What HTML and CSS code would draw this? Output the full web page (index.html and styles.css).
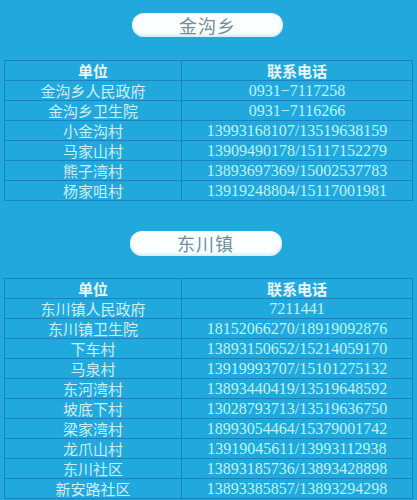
FILE: index.html
```html
<!DOCTYPE html>
<html lang="zh">
<head>
<meta charset="utf-8">
<link rel="stylesheet" href="styles.css">
</head>
<body>
<div class="page">
  <section class="sec first">
    <div class="pill-wrap"><div class="pill">金沟乡</div></div>
    <table class="tbl">
      <tr><th class="c1">单位</th><th class="c2">联系电话</th></tr>
      <tr><td>金沟乡人民政府</td><td class="num">0931−7117258</td></tr>
      <tr><td>金沟乡卫生院</td><td class="num">0931−7116266</td></tr>
      <tr><td>小金沟村</td><td class="num">13993168107/13519638159</td></tr>
      <tr><td>马家山村</td><td class="num">13909490178/15117152279</td></tr>
      <tr><td>熊子湾村</td><td class="num">13893697369/15002537783</td></tr>
      <tr><td>杨家咀村</td><td class="num">13919248804/15117001981</td></tr>
    </table>
  </section>
  <section class="sec second">
    <div class="pill-wrap"><div class="pill">东川镇</div></div>
    <table class="tbl">
      <tr><th class="c1">单位</th><th class="c2">联系电话</th></tr>
      <tr><td>东川镇人民政府</td><td class="num">7211441</td></tr>
      <tr><td>东川镇卫生院</td><td class="num">18152066270/18919092876</td></tr>
      <tr><td>下车村</td><td class="num">13893150652/15214059170</td></tr>
      <tr><td>马泉村</td><td class="num">13919993707/15101275132</td></tr>
      <tr><td>东河湾村</td><td class="num">13893440419/13519648592</td></tr>
      <tr><td>坡底下村</td><td class="num">13028793713/13519636750</td></tr>
      <tr><td>梁家湾村</td><td class="num">18993054464/15379001742</td></tr>
      <tr><td>龙爪山村</td><td class="num">13919045611/13993112938</td></tr>
      <tr><td>东川社区</td><td class="num">13893185736/13893428898</td></tr>
      <tr><td>新安路社区</td><td class="num">13893385857/13893294298</td></tr>
    </table>
  </section>
</div>
</body>
</html>
```
FILE: styles.css
```css
html, body {
  margin: 0;
  padding: 0;
  background: #21a9de;
}
.page {
  width: 417px;
  height: 500px;
  overflow: hidden;
  background: #21a9de;
  font-family: "Liberation Serif", "Noto Sans CJK SC", serif;
}
.sec.first { padding-top: 13px; }
.sec.second { padding-top: 30px; }
.pill-wrap {
  display: flex;
  justify-content: center;
  margin-bottom: 23px;
}
.pill {
  width: 151px;
  height: 24px;
  margin-left: -2px;
  border-radius: 12px;
  background: #fbfeff;
  box-shadow: inset 0 -2px 3px rgba(170, 220, 240, 0.5);
  color: #6f8f9a;
  font-family: "Noto Sans CJK SC", serif;
  font-size: 18px;
  line-height: 24px;
  text-align: center;
  letter-spacing: 1px;
}
.second .pill { width: 152px; height: 25px; line-height: 25px; margin-left: -6px; }
.second .pill-wrap { margin-bottom: 22px; }
.tbl {
  margin-left: 4px;
  width: 409px;
  border-collapse: collapse;
  table-layout: fixed;
}
.tbl th, .tbl td {
  border: 1px solid #1786c0;
  height: 19px;
  padding: 0;
  text-align: center;
  line-height: 19px;
  white-space: nowrap;
  overflow: hidden;
}
.tbl .c1 { width: 176px; }
.tbl th {
  color: #e8f7fd;
  font-family: "Noto Sans CJK SC", sans-serif;
  font-weight: 700;
  font-size: 15px;
}
.tbl td {
  color: #cdeefa;
  font-family: "Noto Sans CJK SC", sans-serif;
  font-size: 15px;
}
.tbl td.num {
  font-family: "Liberation Serif", serif;
  font-size: 16px;
  color: #bff3fd;
}
```
